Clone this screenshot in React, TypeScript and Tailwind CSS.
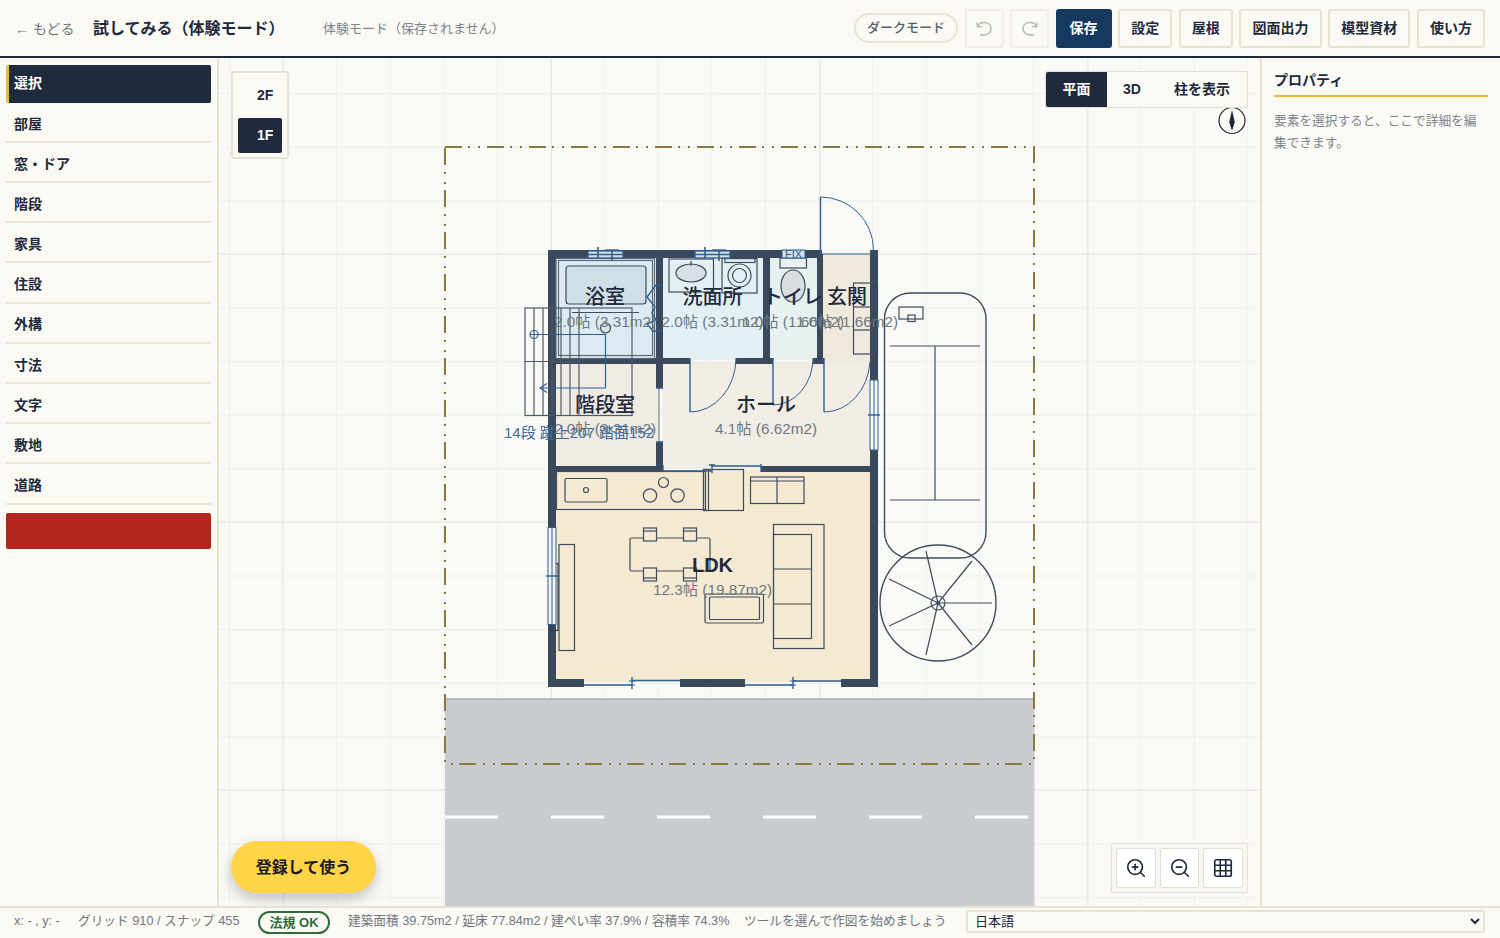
import { ZoomIn, ZoomOut, Grid3x3 } from 'lucide-react';

const FONT = 'font-["Liberation_Sans","Noto_Sans_CJK_JP",sans-serif]';
const WALL = '#3a4a5c';
const LINE = '#3f4c5c';
const BLUE = '#2f5f8f';

const tools = ['部屋', '窓・ドア', '階段', '家具', '住設', '外構', '寸法', '文字', '敷地', '道路'];
const actions = ['設定', '屋根', '図面出力', '模型資材', '使い方'];

function Header() {
  return (
    <header className="h-[58px] shrink-0 flex items-center justify-between pl-[15px] pr-[15px] border-b-2 border-[#1f2a3d] bg-[#fbf9f4]">
      <div className="flex items-center pt-[2px]">
        <span className="text-[14px] text-[#6b7680] w-[78px]">← もどる</span>
        <span className="text-[16px] font-bold text-[#1f2a3d] w-[230px]">試してみる（体験モード）</span>
        <span className="text-[13px] text-[#7b858e]">体験モード（保存されません）</span>
      </div>
      <div className="flex items-center gap-[6.5px]">
        <button className="h-[30px] w-[104px] rounded-full border-2 border-[#e8e2d4] text-[13px] font-medium text-[#56616c]">ダークモード</button>
        <button className="h-[39px] w-[39px] rounded-[3px] border-2 border-[#f1eee8] flex items-center justify-center">
          <svg width="18" height="18" viewBox="0 0 18 18" fill="none" stroke="#b4b9bd" strokeWidth="1.5">
            <path d="M2 3.5 L2.5 8 L7 7.5" />
            <path d="M2.5 7.5 C5 2 15.5 2 16 9.5 C16 15 10 17 5 15.5" />
          </svg>
        </button>
        <button className="h-[39px] w-[39px] rounded-[3px] border-2 border-[#f1eee8] flex items-center justify-center">
          <svg width="18" height="18" viewBox="0 0 18 18" fill="none" stroke="#b4b9bd" strokeWidth="1.5">
            <path d="M16 3.5 L15.5 8 L11 7.5" />
            <path d="M15.5 7.5 C13 2 2.5 2 2 9.5 C2 15 8 17 13 15.5" />
          </svg>
        </button>
        <button className="h-[39px] w-[56px] rounded-[3px] bg-[#163a5f] border-2 border-[#163a5f] text-white text-[14px] font-bold">保存</button>
        {actions.map((a) => (
          <button key={a} className="h-[39px] px-[11.1px] rounded-[3px] border-2 border-[#e8e2d4] text-[14px] font-bold text-[#1f2a3d]">
            {a}
          </button>
        ))}
      </div>
    </header>
  );
}

function Sidebar() {
  return (
    <aside className="w-[219px] shrink-0 border-r-2 border-[#e8e2d4] bg-[#fbf9f4] pt-[7px] pl-[6px] pr-[6px] flex flex-col gap-[2.5px]">
      <div className="h-[37.7px] shrink-0 flex items-center pl-[5px] rounded-[2px] bg-[#1f2a3d] border-l-[3px] border-[#e8b93a] text-white text-[14px] font-bold">選択</div>
      {tools.map((t) => (
        <div key={t} className="h-[37.7px] shrink-0 flex items-center pl-[8px] pt-[2px] border-b-2 border-[#ebe5d8] text-[14px] font-bold text-[#1f2a3d]">
          {t}
        </div>
      ))}
      <div className="h-[36px] shrink-0 mt-[6px] rounded-[2px] bg-[#b3261e]" />
    </aside>
  );
}

function Grid() {
  const minorX = Array.from({ length: 21 }, (_, i) => 229.4 + i * 53.6);
  const minorY = Array.from({ length: 17 }, (_, i) => 93.6 + i * 53.6);
  return (
    <g>
      {minorX.map((x) => <line key={x} x1={x} x2={x} y1={58} y2={906} stroke="#eef0f0" strokeWidth="1" />)}
      {minorY.map((y) => <line key={y} y1={y} y2={y} x1={219} x2={1260} stroke="#eef0f0" strokeWidth="1" />)}
      {[283, 551.5, 820, 1088].map((x) => <line key={x} x1={x} x2={x} y1={58} y2={906} stroke="#e2e7ea" strokeWidth="1" />)}
      {[254, 522, 790].map((y) => <line key={y} y1={y} y2={y} x1={219} x2={1260} stroke="#e2e7ea" strokeWidth="1" />)}
    </g>
  );
}

function Road() {
  return (
    <g>
      <rect x={445} y={699} width={589.5} height={207} fill="#c8cbd0" />
      <line x1={445} x2={1034} y1={699} y2={699} stroke="#a9adb3" strokeWidth="1.5" />
      {[445, 551, 657, 763, 869, 975].map((x) => <rect key={x} x={x} y={815.5} width={53} height={3} fill="#fff" />)}
      <rect x={445} y={147} width={589} height={617} fill="none" stroke="#8a7a3c" strokeWidth="2" strokeDasharray="17 6 2 8 2 7" />
    </g>
  );
}

function Rooms() {
  return (
    <g>
      <rect x={556} y={258} width={100} height={102} fill="#dcebf2" />
      <rect x={662} y={258} width={102} height={102} fill="#e2eff3" />
      <rect x={770} y={258} width={50} height={102} fill="#e8f1ef" />
      <rect x={820} y={254} width={52} height={108} fill="#efe8dc" />
      <rect x={662} y={362} width={210} height={106} fill="#f2ede4" />
      <rect x={556} y={362} width={102} height={106} fill="#efebe3" />
      <rect x={556} y={470} width={316} height={212} fill="#f6e9d2" />
    </g>
  );
}

function Walls() {
  const walls = [
    [548, 250, 274, 8],
    [548, 250, 8, 437],
    [870, 250, 8, 130],
    [870, 450, 8, 237],
    [548, 679, 36, 8],
    [680, 679, 65, 8],
    [841, 679, 37, 8],
    [548, 358, 142, 6],
    [736, 358, 37, 6],
    [813, 358, 11, 6],
    [656, 258, 7, 130],
    [656, 442, 7, 30],
    [763, 258, 7, 106],
    [817, 254, 6, 110],
    [548, 466, 115, 6],
    [761, 466, 117, 6],
  ];
  return (
    <g>
      {walls.map(([x, y, w, h]) => <rect key={`${x}-${y}`} x={x} y={y} width={w} height={h} fill={WALL} />)}
    </g>
  );
}

function TopWindow({ x }: { x: number }) {
  return (
    <g stroke={BLUE} strokeWidth="1.3" fill="none">
      <rect x={x} y={251} width={35} height={7} fill="#d5e0e8" />
      <line x1={x} x2={x + 35} y1={254.5} y2={254.5} />
      <line x1={x + 10} x2={x + 10} y1={247} y2={258} strokeWidth="1.6" />
      <line x1={x + 24} x2={x + 24} y1={250} y2={261} strokeWidth="1.6" />
      <line x1={x + 17} x2={x + 31} y1={250} y2={250} />
    </g>
  );
}

function Openings() {
  return (
    <g fill="none" stroke={BLUE}>
      <TopWindow x={588} />
      <TopWindow x={695} />
      <rect x={782} y={250} width={23} height={8} fill="#d5e0e8" strokeWidth="1" />
      <text x={793.5} y={258} textAnchor="middle" fontSize="11" fill={BLUE} stroke="none">FIX</text>

      {/* bath folding door */}
      <path d="M662 285 L656 285 L647 297 L655 307 L652 313 L656 320 L647 324 L653 331 L662 331" strokeWidth="1.4" />
      <path d="M659 388 L659 442" stroke="#8b97a3" strokeWidth="1.5" />
      <path d="M656 388 L663 388 M656 442 L663 442" strokeWidth="1.5" />

      {/* swing doors */}
      <path d="M690 358 L690 412" strokeWidth="1.4" />
      <path d="M690 412 A46 54 0 0 0 736 358" strokeWidth="1" />
      <path d="M773 358 L773 405" strokeWidth="1.4" />
      <path d="M773 405 A40 47 0 0 0 813 358" strokeWidth="1" />
      <path d="M824 358 L824 412" strokeWidth="1.4" />
      <path d="M824 412 A46 54 0 0 0 870 362" strokeWidth="1" />
      <path d="M820.5 197 L820.5 254" strokeWidth="1.4" />
      <path d="M820.5 197 A53 53 0 0 1 873.5 250" strokeWidth="1" />
      <path d="M820 254 L870 254" strokeWidth="1" />

      {/* east window */}
      <rect x={870} y={380} width={8} height={70} fill="#f4f6f6" strokeWidth="1" />
      <line x1={874} x2={874} y1={380} y2={450} strokeWidth="1" />
      <line x1={868} x2={880} y1={415} y2={415} strokeWidth="1.4" />

      {/* ldk west window */}
      <rect x={548} y={527.5} width={8} height={97} fill="#f6f4ee" strokeWidth="1" />
      <line x1={552} x2={552} y1={527.5} y2={624.5} strokeWidth="1" />
      <line x1={546} x2={558} y1={576} y2={576} strokeWidth="1.4" />

      {/* sliding doors */}
      <path d="M663 471 L712 471 M712 466 L761 466" strokeWidth="1.4" />
      <path d="M663 465 L663 472 M712 464 L712 473 M709 465 L715 465 M761 464 L761 472" strokeWidth="1.4" />
      <path d="M584 685 L632 685 M632 680.5 L680 680.5 M632 677 L632 689" strokeWidth="1.4" />
      <path d="M745 685 L793 685 M793 681 L841 681 M793 677 L793 689" strokeWidth="1.4" />
      <path d="M629 681 L635 681 M629 685 L635 685 M790 681 L796 681 M790 685 L796 685" strokeWidth="1.2" />
    </g>
  );
}

function Fixtures() {
  return (
    <g fill="none" stroke={LINE} strokeWidth="1.2">
      {/* bath */}
      <rect x={556} y={258.5} width={98.5} height={100} stroke="#5d6b79" />
      <rect x={558.5} y={260.5} width={94} height={95} stroke="#5d6b79" />
      <rect x={566} y={266} width={80} height={38} rx={3} fill="#cfdfe6" />
      <line x1={572} x2={639} y1={312.5} y2={312.5} />
      <circle cx={605.5} cy={328} r={5} fill="#dbe3e6" />
      {/* sink */}
      <rect x={669} y={259} width={44.5} height={33} />
      <ellipse cx={691} cy={273} rx={15} ry={9} fill="#d7e0e4" />
      <line x1={691} x2={691} y1={261} y2={266} />
      {/* washer */}
      <rect x={722} y={258.5} width={35} height={34.5} />
      <rect x={725} y={258.5} width={30} height={4} />
      <circle cx={739.5} cy={275.5} r={11.5} />
      <circle cx={739.5} cy={275.5} r={7} />
      {/* toilet */}
      <rect x={780} y={258} width={26.5} height={10} />
      <ellipse cx={793} cy={286} rx={12} ry={16} fill="#d8dde0" />
      {/* shoe cabinet */}
      <rect x={853.5} y={283} width={24} height={71} />
      <line x1={853.5} x2={877.5} y1={307} y2={307} />
      <line x1={853.5} x2={877.5} y1={330} y2={330} />
      {/* kitchen */}
      <rect x={556.5} y={471.5} width={149} height={38} />
      <rect x={565} y={478.5} width={42} height={23.5} rx={1.5} />
      <circle cx={586} cy={490} r={2.5} />
      <circle cx={663.5} cy={482.5} r={5} />
      <circle cx={650} cy={495.5} r={6.7} />
      <circle cx={677.5} cy={495.5} r={6.7} />
      <rect x={703.5} y={469.5} width={40} height={41} />
      <rect x={703.5} y={469.5} width={5} height={41} />
      <rect x={750.5} y={477} width={53.5} height={26.5} />
      <line x1={777} x2={777} y1={477} y2={503.5} />
      <line x1={750.5} x2={804} y1={481} y2={481} />
      {/* dining */}
      <rect x={630} y={538} width={80} height={33} rx={1.5} />
      {[[643.5, 528], [683.5, 528], [643.5, 568], [683.5, 568]].map(([x, y]) => (
        <g key={`${x}-${y}`}>
          <rect x={x} y={y} width={13} height={13} fill="#f6e9d2" />
          <line x1={x} x2={x + 13} y1={y < 550 ? y + 3 : y + 10} y2={y < 550 ? y + 3 : y + 10} />
        </g>
      ))}
      {/* living */}
      <rect x={773.5} y={524.5} width={50.5} height={124} />
      <rect x={773.5} y={534.5} width={38} height={104} />
      <line x1={773.5} x2={811.5} y1={569} y2={569} />
      <line x1={773.5} x2={811.5} y1={604} y2={604} />
      <rect x={705} y={594} width={58.5} height={29} rx={1.5} />
      <rect x={709.5} y={597} width={50} height={22.5} rx={1} />
      <rect x={559} y={544.5} width={15.5} height={106} />
      <rect x={550.5} y={563.5} width={7.5} height={67} stroke="#2e3a48" />
      {/* stairs */}
      <g stroke="#4d5a68">
        <rect x={525} y={308} width={107} height={107.5} />
        {[534, 543, 552, 561, 570, 579].map((x) => <line key={x} x1={x} x2={x} y1={308} y2={415.5} />)}
        <line x1={525} x2={579} y1={361.5} y2={361.5} />
      </g>
      <g stroke={BLUE} strokeWidth="1.2">
        <circle cx={534} cy={334.5} r={4} />
        <path d="M530 334.5 L605.5 334.5 L605.5 388 L540 388" />
        <path d="M547 383.5 L540 388 L547 392.5" />
      </g>
      {/* car */}
      <rect x={884.5} y={293} width={101.5} height={265} rx={26} strokeWidth="1.4" />
      <line x1={890} x2={980} y1={346} y2={346} />
      <line x1={935} x2={935} y1={346} y2={500} />
      <line x1={890} x2={980} y1={500} y2={500} />
      <rect x={899} y={307} width={24} height={12} />
      <rect x={908} y={315} width={7} height={6.5} />
      {/* bike */}
      <circle cx={938} cy={603} r={58} strokeWidth="1.4" fill="none" />
      <circle cx={938} cy={603} r={7} />
      <circle cx={938} cy={603} r={1.5} fill={LINE} />
      {[[992, 603], [972, 645], [926, 655], [889, 626], [889, 579], [926, 551], [972, 561]].map(([x, y]) => (
        <line key={`${x}-${y}`} x1={938} y1={603} x2={x} y2={y} />
      ))}
    </g>
  );
}

function Labels() {
  const names: [string, number, number][] = [
    ['浴室', 605, 304],
    ['洗面所', 712.5, 304],
    ['トイレ', 793, 304],
    ['玄関', 847, 304],
    ['階段室', 605, 411.5],
    ['ホール', 766, 411.5],
  ];
  const areas: [string, number, number][] = [
    ['2.0帖 (3.31m2)', 605, 326.5],
    ['2.0帖 (3.31m2)', 712.5, 326.5],
    ['1.0帖 (1.66m2)', 793, 326.5],
    ['1.0帖 (1.66m2)', 847, 326.5],
    ['2.0帖 (3.31m2)', 605, 434],
    ['4.1帖 (6.62m2)', 766, 434],
    ['12.3帖 (19.87m2)', 712.5, 595],
  ];
  return (
    <g textAnchor="middle">
      {names.map(([t, x, y]) => (
        <text key={t} x={x} y={y} fontSize="20" fontWeight="500" fill="#1f2a3d">{t}</text>
      ))}
      <text x={712.5} y={571.5} fontSize="20" fontWeight="700" fill="#1f2a3d">LDK</text>
      {areas.map(([t, x, y]) => (
        <text key={`${t}-${x}-${y}`} x={x} y={y} fontSize="15.3" fill="#6f7880">{t}</text>
      ))}
      <text x={579} y={438} fontSize="15" fill="#3f6d99">14段 蹴上207 踏面152</text>
    </g>
  );
}

function Compass() {
  return (
    <g>
      <circle cx={1232} cy={120.5} r={13} fill="#fbf9f4" stroke="#1f2a3d" strokeWidth="1.2" />
      <path d="M1232 110 L1234.8 122 L1232 131 L1229.2 122 Z" fill="#1f2a3d" />
    </g>
  );
}

function Canvas() {
  return (
    <main className="relative flex-1 min-w-0 bg-[#f9f9f6] overflow-hidden">
      <svg className="absolute inset-0 w-full h-full" viewBox="219 58 1041 848">
        <Grid />
        <Road />
        <Rooms />
        <Walls />
        <Fixtures />
        <Openings />
        <Labels />
        <Compass />
      </svg>

      <div className="absolute left-[12px] top-[13px] w-[58px] h-[88px] p-[5px] rounded-[2px] bg-[#fbf9f4] border-2 border-[#e8e2d4] flex flex-col gap-[5px]">
        <div className="h-[35px] shrink-0 flex items-center pl-[19px] text-[14px] font-bold text-[#1f2a3d]">2F</div>
        <div className="h-[35px] shrink-0 flex items-center pl-[19px] rounded-[2px] bg-[#1f2a3d] text-[14px] font-bold text-white">1F</div>
      </div>

      <div className="absolute left-[826px] top-[13px] w-[203px] h-[37px] flex items-center rounded-[2px] bg-[#fbf9f4] border border-[#e6dfd0] text-[14px] font-bold text-[#1f2a3d]">
        <div className="h-full w-[61px] flex items-center justify-center bg-[#1f2a3d] text-white rounded-l-[2px]">平面</div>
        <div className="w-[50px] text-center">3D</div>
        <div className="flex-1 text-center">柱を表示</div>
      </div>

      <div className="absolute left-[892px] top-[785px] w-[137px] h-[50px] p-[4px] flex gap-[4px] rounded-[2px] bg-[#f8f6f0] border border-[#e6dfd0]">
        {[ZoomIn, ZoomOut, Grid3x3].map((Icon, i) => (
          <div key={i} className="flex-1 flex items-center justify-center rounded-[2px] bg-white border border-[#e6dfd0] text-[#1f2a3d]">
            <Icon size={22} strokeWidth={1.8} />
          </div>
        ))}
      </div>

      <div className="absolute left-[12px] top-[783px] w-[145px] h-[52px] pt-[1px] rounded-full bg-[#ffd447] shadow-[0_6px_14px_rgba(0,0,0,0.22)] flex items-center justify-center text-[16px] font-bold text-[#1a1a1a]">登録して使う</div>
    </main>
  );
}

function Properties() {
  return (
    <aside className="w-[240px] shrink-0 border-l-2 border-[#e8e2d4] bg-[#fbf9f4] pl-[12px] pr-[12px] pt-[12px]">
      <div className="pb-[5px] border-b-2 border-[#e8b93a] text-[14px] font-bold text-[#1f2a3d] leading-[20px]">プロパティ</div>
      <p className="mt-[13px] max-w-[210px] text-[12.7px] leading-[22px] text-[#7b858e]">要素を選択すると、ここで詳細を編集できます。</p>
    </aside>
  );
}

function StatusBar() {
  return (
    <footer className="h-[32px] shrink-0 flex items-center pl-[14px] pr-[15px] pb-[3px] border-t-2 border-[#e8e2d4] bg-[#fbf9f4] text-[12.7px] text-[#6f7880]">
      <span className="w-[64px]">x: - , y: -</span>
      <span className="w-[180px]">グリッド 910 / スナップ 455</span>
      <span className="w-[72px] h-[23px] mt-[2px] flex items-center justify-center rounded-full border-2 border-[#2f6b3c] text-[13px] text-[#2f6b3c] font-bold">法規 OK</span>
      <span className="ml-[18px] w-[396px]">建築面積 39.75m2 / 延床 77.84m2 / 建ぺい率 37.9% / 容積率 74.3%</span>
      <span className="w-[222px]">ツールを選んで作図を始めましょう</span>
      <select className="flex-1 h-[23px] pl-[3px] rounded-[3px] border-2 border-[#e8e2d4] bg-[#fbf9f4] text-[13px] text-[#1f2a3d]" defaultValue="ja">
        <option value="ja">日本語</option>
      </select>
    </footer>
  );
}

export default function App() {
  return (
    <div className={`h-[938px] w-[1500px] flex flex-col overflow-hidden ${FONT}`}>
      <Header />
      <div className="flex flex-1 min-h-0">
        <Sidebar />
        <Canvas />
        <Properties />
      </div>
      <StatusBar />
    </div>
  );
}
